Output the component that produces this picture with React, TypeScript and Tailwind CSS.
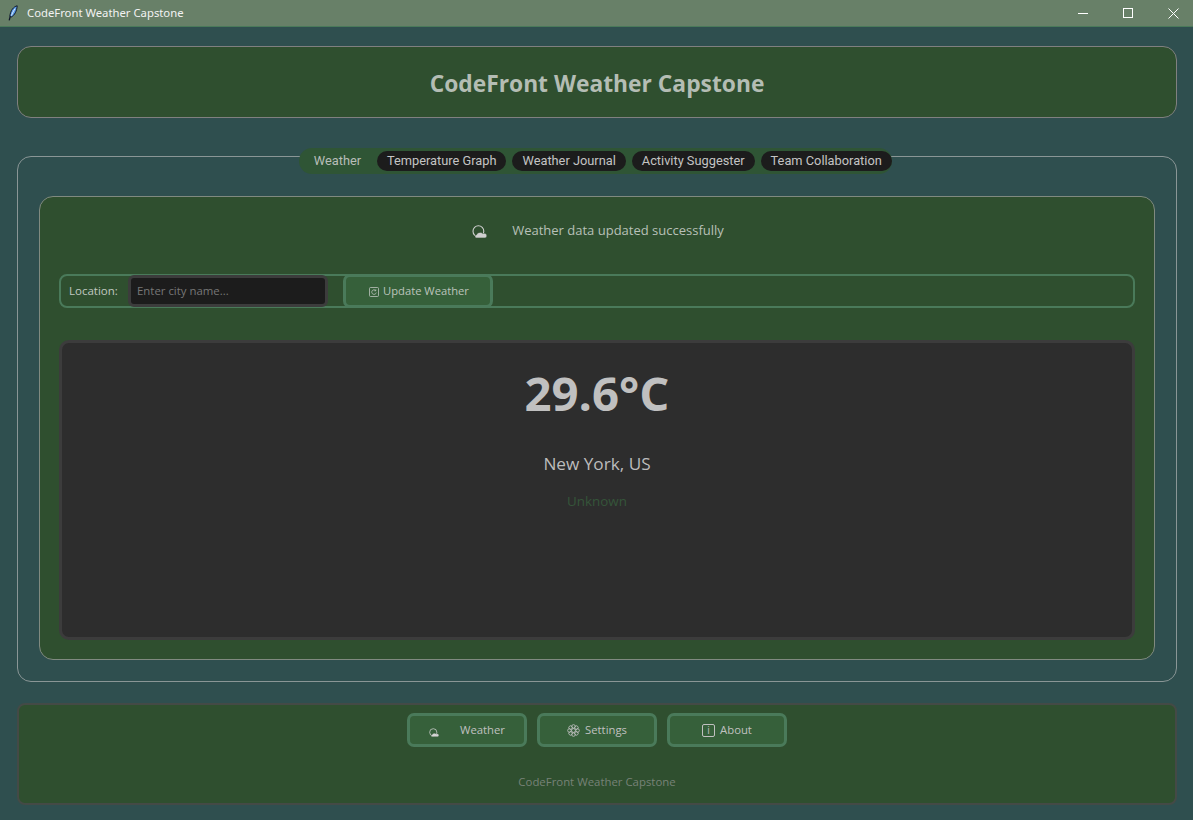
import React from "react";

const Cloud = ({ className = "" }: { className?: string }) => (
  <svg viewBox="0 0 15 13" className={className}>
    <circle cx="6.4" cy="6.2" r="5.4" fill="none" stroke="currentColor" strokeWidth="1.1" />
    <path d="M4.4 12.9 C2.6 12.9 2.4 10 4.6 9.8 C5.4 7.4 9.2 6.6 10.8 8.6 C13 7.8 14.9 9 14.8 10.8 C14.8 12.2 14 12.9 13 12.9 Z" fill="currentColor" stroke="#2f4f2f" strokeWidth="0.5" />
  </svg>
);

const Gear = () => (
  <svg viewBox="0 0 14 14" className="w-[13px] h-[13px]" fill="none" stroke="currentColor" strokeWidth="0.9">
    <circle cx="7" cy="7" r="2.1" />
    {[0, 45, 90, 135, 180, 225, 270, 315].map((a) => (
      <circle key={a} cx="7" cy="2.6" r="1.9" transform={`rotate(${a} 7 7)`} />
    ))}
  </svg>
);

const tabs = ["Temperature Graph", "Weather Journal", "Activity Suggester", "Team Collaboration"];

const footerBtn = "w-[120px] h-[34px] rounded-[7px] border-[3px] border-[#4a7a5a] bg-[#36603a] flex items-center justify-center text-[11.3px] text-[#c0c0c0]";

export default function App() {
  return (
    <div className="w-[1193px] h-[820px] overflow-hidden flex flex-col bg-[#2f4f4f] font-['Open_Sans','Noto_Sans',sans-serif]">
      <div className="h-[27px] shrink-0 flex items-center bg-[#688068] border-b border-[#4a7a5a] text-white">
        <svg viewBox="0 0 10 16" className="w-[10px] h-[16px] ml-[8px]">
          <path d="M9.2 0.8 C5.6 1.6 2.4 5.4 1.8 11.4 L3.2 12 C6.6 10.4 8.8 6 9.2 0.8 Z" fill="#5a9be8" stroke="#10182a" strokeWidth="1" />
          <path d="M7 3.6 C5.4 6 4.2 8.4 3.4 10.6" fill="none" stroke="#e8f2ff" strokeWidth="0.9" />
          <path d="M2.2 11.5 L1.2 15.4" stroke="#10182a" strokeWidth="1.3" />
        </svg>
        <span className="ml-[9px] text-[11.3px] text-[#f2f2f2] font-['Noto_Sans',sans-serif]">CodeFront Weather Capstone</span>
        <div className="ml-auto mr-[14px] flex items-center gap-[35px]">
          <div className="w-[10px] h-px bg-white" />
          <div className="w-[10px] h-[10px] border border-white" />
          <svg viewBox="0 0 11 11" className="w-[11px] h-[11px]" stroke="white" strokeWidth="1">
            <path d="M0.5 0.5 L10.5 10.5 M10.5 0.5 L0.5 10.5" />
          </svg>
        </div>
      </div>

      <div className="flex-1 flex flex-col pl-[17px] pr-[16px]">
        <header className="mt-[19px] h-[72px] rounded-[14px] border border-[#808080] bg-[#2f4f2f] flex items-center justify-center pt-[5px]">
          <h1 className="text-[22.8px] font-bold text-[#b4bdb4] leading-none">CodeFront Weather Capstone</h1>
        </header>

        <section className="mt-[38px] h-[526px] rounded-[14px] border border-[#8a9696] flex flex-col items-center">
          <div className="-mt-[9px] mr-[3px] h-[26px] w-[593px] shrink-0 rounded-[13px] bg-[#2f5535] flex items-center pl-[5px] gap-[6px] font-['Roboto',sans-serif] text-[12.8px]">
            <div className="w-[67px] h-[20px] flex items-center justify-center text-[#b8bdb8]">Weather</div>
            {tabs.map((t) => (
              <div key={t} className="h-[20px] px-[10px] rounded-[10px] bg-[#1c1c1c] flex items-center text-[#c4c4c4] whitespace-nowrap">
                {t}
              </div>
            ))}
          </div>

          <div className="mt-[22px] w-[1116px] h-[464px] rounded-[14px] border border-[#808a80] bg-[#2f4f2f] flex flex-col items-stretch px-[19px]">
            <div className="h-[68px] shrink-0 flex items-center justify-center pl-[2px] text-[#b8c0b8] text-[13px]">
              <Cloud className="w-[15px] h-[13px] text-[#d0d0d0]" />
              <span className="ml-[25px]">Weather data updated successfully</span>
            </div>

            <div className="mt-[9px] h-[34px] shrink-0 rounded-[8px] border-2 border-[#4a7a5a] flex items-center relative">
              <span className="ml-[8px] text-[11.5px] text-[#c0c8c0] w-[59px]">Location:</span>
              <div className="w-[200px] h-[32px] rounded-[6px] border-[3px] border-[#3c3c3c] bg-[#1c1c1c] flex items-center pl-[6px] text-[11.4px] text-[#777777]">
                Enter city name...
              </div>
              <div className="ml-[15px] -my-[2px] w-[150px] h-[34px] rounded-[7px] border-[3px] border-[#4a7a5a] bg-[#36603a] flex items-center justify-center pl-[2px] text-[11.2px] text-[#bcc4bc]">
                <svg viewBox="0 0 10 10" className="w-[10px] h-[10px] mr-[4px] mt-px" fill="none" stroke="currentColor" strokeWidth="0.8">
                  <rect x="0.5" y="0.5" width="9" height="9" rx="1" />
                  <path d="M6.8 3.6 A2.3 2.3 0 1 0 7.3 5.6 M6.8 2.4 V3.8 H5.4" />
                </svg>
                Update Weather
              </div>
            </div>

            <div className="mt-[32px] h-[300px] shrink-0 rounded-[10px] border-[3px] border-[#3c3c3c] bg-[#2d2d2d] flex flex-col items-center">
              <div className="mt-[20px] text-[47.3px] leading-[60px] font-bold text-[#c0c0c0]">29.6°C</div>
              <div className="mt-[29px] text-[17.2px] leading-[24px] text-[#bcbcbc]">New York, US</div>
              <div className="mt-[16px] text-[13.4px] leading-[18px] text-[#35553a]">Unknown</div>
            </div>
          </div>
        </section>

        <footer className="mt-[21px] h-[102px] rounded-[8px] border-[2px] border-[#444a46] bg-[#2f4f2f] flex flex-col items-center">
          <div className="mt-[8px] flex gap-[10px]">
            <div className={footerBtn}>
              <Cloud className="w-[10px] h-[9px] text-[#d4d4d4] mt-[4px]" />
              <span className="ml-[21px]">Weather</span>
            </div>
            <div className={footerBtn}>
              <Gear />
              <span className="ml-[5px]">Settings</span>
            </div>
            <div className={footerBtn}>
              <span className="w-[13px] h-[13px] rounded-[2px] border border-[#c0c0c0] flex items-center justify-center text-[10px] leading-none">i</span>
              <span className="ml-[5px]">About</span>
            </div>
          </div>
          <div className="mt-[27px] text-[11.4px] leading-[16px] text-[#778277]">CodeFront Weather Capstone</div>
        </footer>
      </div>
    </div>
  );
}
